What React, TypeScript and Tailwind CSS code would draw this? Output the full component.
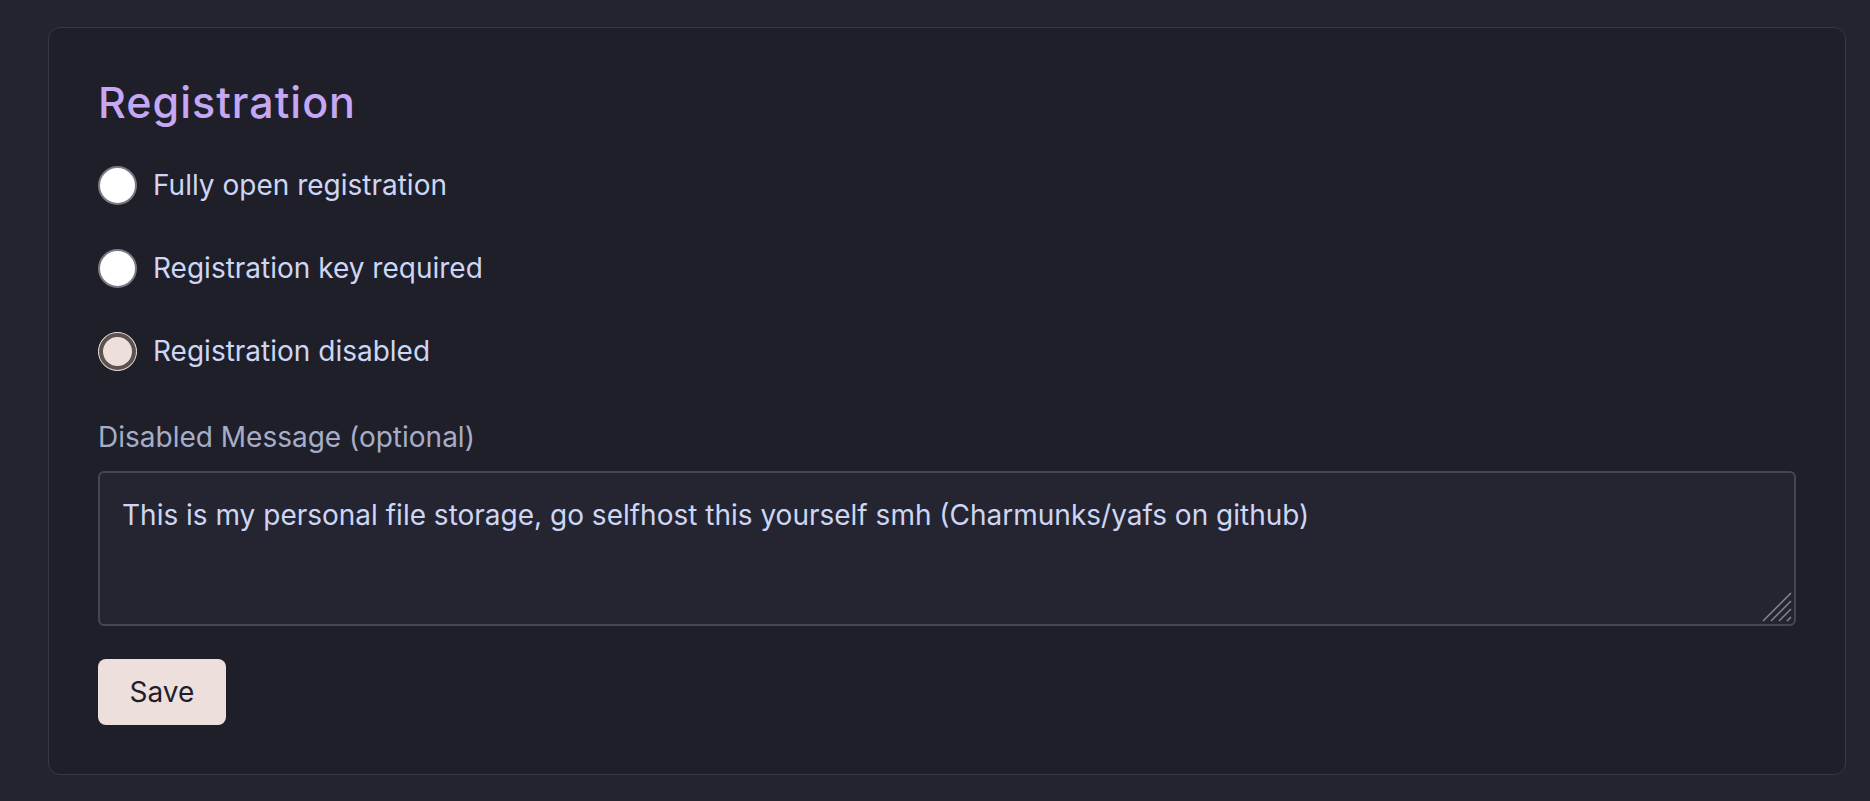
import React from "react";

const font = { fontFamily: "Inter, 'Noto Sans', sans-serif" };

function Radio({ label, checked }: { label: string; checked?: boolean }) {
  return (
    <label className="flex items-center gap-[16px] h-[40px]">
      {checked ? (
        <span className="w-[39px] h-[39px] rounded-full bg-[#ede0dc] border border-[#ede0dc] flex items-center justify-center shrink-0">
          <span className="w-[37px] h-[37px] rounded-full border-[4px] border-[#5b5350] bg-[#ede0dc]" />
        </span>
      ) : (
        <span className="w-[39px] h-[39px] rounded-full bg-white border-[2px] border-[#7a7a86] shrink-0" />
      )}
      <span className="text-[28px] text-[#cdd6f4] leading-none">{label}</span>
    </label>
  );
}

export default function App() {
  return (
    <div className="w-[1870px] h-[801px] bg-[#242431] pt-[27px] pl-[48px] pr-[24px]" style={font}>
      <div className="h-[748px] rounded-[12px] border border-[#373746] bg-[#1f1f29] px-[49px] pt-[50px]">
        <h2 className="text-[43px] leading-[48px] tracking-[1px] text-[#c6a7f4] font-medium">Registration</h2>
        <div className="mt-[39px] flex flex-col gap-[43px]">
          <Radio label="Fully open registration" />
          <Radio label="Registration key required" />
          <Radio label="Registration disabled" checked />
        </div>
        <div className="mt-[48px] text-[28px] leading-[36px] text-[#a6adc8]">Disabled Message (optional)</div>
        <div className="mt-[16px] h-[155px] rounded-[6px] border-[2px] border-[#454556] bg-[#252532] px-[22px] pt-[24px] relative">
          <div className="text-[28px] leading-[36px] text-[#cdd6f4]">
            This is my personal file storage, go selfhost this yourself smh (Charmunks/yafs on github)
          </div>
          <svg className="absolute right-[2px] bottom-[2px]" width="30" height="30" viewBox="0 0 30 30">
            <line x1="29" y1="1" x2="1" y2="29" stroke="#8a8a8a" strokeWidth="1.5" />
            <line x1="29" y1="9" x2="9" y2="29" stroke="#8a8a8a" strokeWidth="1.5" />
            <line x1="29" y1="17" x2="17" y2="29" stroke="#8a8a8a" strokeWidth="1.5" />
            <line x1="29" y1="25" x2="25" y2="29" stroke="#8a8a8a" strokeWidth="1.5" />
          </svg>
        </div>
        <button className="mt-[33px] w-[128px] h-[66px] rounded-[8px] bg-[#ede0dc] text-[#1e1e2e] text-[28px]">
          Save
        </button>
      </div>
    </div>
  );
}
